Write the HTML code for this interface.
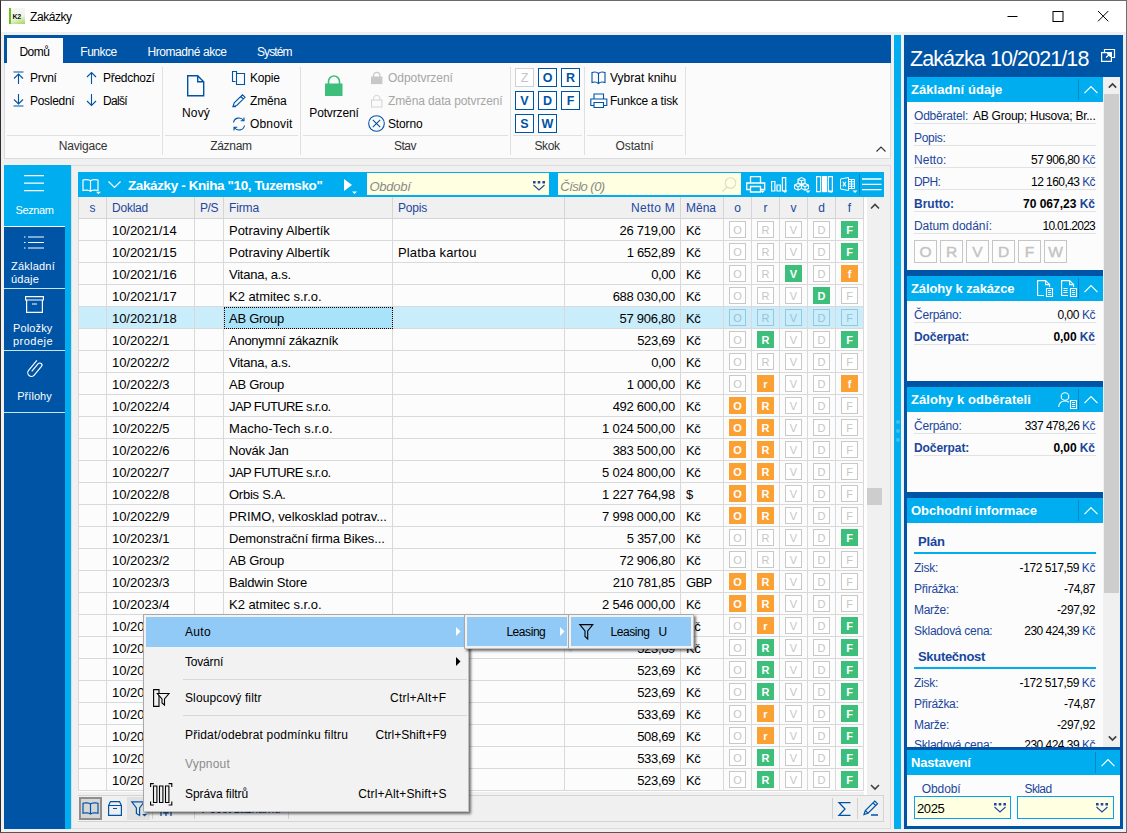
<!DOCTYPE html>
<html lang="cs">
<head>
<meta charset="utf-8">
<title>Zakázky</title>
<style>
*{box-sizing:border-box;margin:0;padding:0}
html,body{width:1127px;height:833px;overflow:hidden;background:#fff}
body{font-family:"Liberation Sans",sans-serif;font-size:12px;color:#000;position:relative}
.a{position:absolute}
i{font-style:normal}
svg{position:absolute;overflow:visible}
/* window frame */
#frame{left:0;top:0;width:1127px;height:833px;border:1px solid #2e2e2e;border-top-color:#6a6a6a;border-right-color:#6e6e6e;border-bottom:2px solid #5c5252}
#title{left:1px;top:1px;width:1125px;height:31px;background:#fff}
#bg{left:1px;top:32px;width:1125px;height:800px;background:#f0f0f0}
/* ribbon */
#rtabs{left:4px;top:35px;width:887px;height:28px;background:#0054a6}
.tab{position:absolute;top:39px;height:25px;line-height:26px;color:#fff;font-size:12px;white-space:nowrap}
#rbody{left:4px;top:63px;width:887px;height:96px;background:#fbfbfb;border:1px solid #dcdcdc;border-top:none}
.rt{position:absolute;white-space:nowrap;font-size:12px;line-height:14px}
.dis{color:#a6a6a6}
.vsep{position:absolute;top:67px;width:1px;height:88px;background:#e0e0e0}
.hsep{position:absolute;top:135px;height:1px;background:#e0e0e0}
.gl{position:absolute;top:139px;text-align:center;font-size:12px;line-height:14px;color:#333}
.jb{position:absolute;width:19px;height:19px;border:1px solid #0054a6;color:#0054a6;font-weight:bold;font-size:12.500px;line-height:19px;text-align:center;background:#fff}
.jb.d{border-color:#d0d0d0;color:#c4c4c4;font-weight:normal}
/* sidebar */
#side{left:4px;top:165px;width:67px;height:664px;background:#00aeef}
.sb{position:absolute;left:0;width:61px;background:#0054a6;color:#fff;text-align:center;font-size:12px;line-height:13px}
.sbt{position:absolute;left:0;width:100%;text-align:center;color:#fff;font-size:11px;line-height:13px}
/* grid */
#gpanel{left:71px;top:165px;width:820px;height:664px;border:1px solid #dcdcdc;background:#f0f0f0}
#ghead{left:78px;top:172px;width:806px;height:25px;background:#00aeef}
#gcols{left:78px;top:197px;width:786px;height:22px;background:#f0f0f0}
.h{position:absolute;top:0;height:22px;line-height:23px;color:#23479e;font-size:12px;border-right:1px solid #d5d5d5;border-bottom:1px solid #d5d5d5;padding-left:4px;white-space:nowrap}
#gbody{left:78px;top:219px;width:786px;height:573px;background:#fcfcfc}
.r{position:absolute;left:78px;width:786px;height:22px;background:#fcfcfc}
.r.sel{background:#c9edfb}
.c{position:absolute;top:0;height:22px;line-height:23px;font-size:13px;border-right:1px solid #d9d9d9;border-bottom:1px solid #d9d9d9;padding-left:5px;white-space:nowrap;overflow:hidden}
.c1{left:0;width:29px;border-left:1px solid #d9d9d9}.c2{left:29px;width:88px;padding-left:5px}.c3{left:117px;width:29px}.c4{left:146px;width:169px}
.c5{left:315px;width:172px}.c6{left:487px;width:116px;text-align:right;padding-right:5px}.c7{left:603px;width:43px;padding-left:5px}
.c8{left:646px;width:28px}.c9{left:674px;width:28px}.c10{left:702px;width:28px}.c11{left:730px;width:28px}.c12{left:758px;width:28px}
.c8,.c9,.c10,.c11,.c12{padding:0}
.selc{background:#a9e3f9;outline:1px dotted #000;outline-offset:-1px}
.fl{position:absolute;left:5px;top:2px;width:17px;height:17px;border:1px solid #c8c8c8;color:#c6c6c6;font-size:11px;line-height:17px;text-align:center;background:#fff}
.sel .fl{background:transparent;border-color:#9ac6da;color:#96c3d8}
.fl.g{background:#3dbf7b;border-color:#3dbf7b;color:#fff;font-weight:bold}
.fl.o{background:#fba134;border-color:#fba134;color:#fff;font-weight:bold}
/* right panel */
#rp{left:904px;top:35px;width:219px;height:794px;background:#0054a6}
.sh{position:absolute;left:907px;width:196px;height:25px;background:#00aeef;color:#fff;font-weight:bold;font-size:13px;line-height:25px;padding-left:4px;white-space:nowrap;overflow:hidden}
.sc{position:absolute;left:907px;width:196px;background:#fcfcfc}
.lb{position:absolute;left:914px;font-size:12px;line-height:14px;color:#1b469c;white-space:nowrap}
.vl{position:absolute;right:32px;font-size:12px;line-height:14px;color:#000;white-space:nowrap;text-align:right}
.vl b,.lb b{font-weight:bold}
.kc{color:#1b469c}
.ln{position:absolute;left:914px;width:182px;height:1px;background:#e2e2e2}
.chev{position:absolute;width:24px;height:24px}
.pf{position:absolute;width:23px;height:23px;border:1px solid #c6c6c6;background:#fdfdfd;color:#c3c3c3;font-size:15.500px;line-height:22px;text-align:center;-webkit-text-stroke:.4px #c3c3c3}
/* menu */
.menu{position:absolute;background:#f2f2f2;border:1px solid #a8a8a8;border-right-color:#c0c0c0;border-bottom-color:#c0c0c0;box-shadow:2px 2px 2.500px rgba(0,0,0,.55)}
.mi{position:absolute;font-size:12px;line-height:14px;white-space:nowrap;color:#000}
</style>
</head>
<body>
<div id="frame" class="a"></div>
<div id="title" class="a"></div>
<div id="bg" class="a"></div>

<!-- TITLE BAR -->
<div class="a" style="left:9px;top:8px;width:16px;height:16px;background:linear-gradient(160deg,#f7f7f7 0%,#f1f5ea 55%,#a3d755 100%);border-left:2px solid #6cc016;overflow:hidden"><i style="position:absolute;left:1.500px;top:4.500px;font-size:7px;line-height:7px;font-weight:bold;color:#111;letter-spacing:-.4px">K2</i></div>
<div class="a" style="letter-spacing:-0.43px;left:30px;top:10px;font-size:12px;line-height:15px">Zakázky</div>
<svg style="left:1007px;top:10px" width="110" height="14" viewBox="0 0 110 14" fill="none" stroke="#000" stroke-width="1"><path d="M.500 6.500h10"/><rect x="46" y="1.500" width="10" height="10"/><path d="M91 1l10.300 10.300M101.300 1L91 11.300"/></svg>

<!-- RIBBON -->
<div id="rtabs" class="a"></div>
<div class="a" style="left:7px;top:38px;width:56px;height:25px;background:#fbfbfb"></div>
<div class="tab" style="letter-spacing:-0.55px;left:19.500px;color:#000">Domů</div>
<div class="tab" style="letter-spacing:-0.49px;left:80.300px">Funkce</div>
<div class="tab" style="letter-spacing:-0.44px;left:147.500px">Hromadné akce</div>
<div class="tab" style="letter-spacing:-0.92px;left:257px">Systém</div>
<div id="rbody" class="a"></div>
<div class="vsep" style="left:162px"></div><div class="vsep" style="left:300px"></div><div class="vsep" style="left:510px"></div><div class="vsep" style="left:584px"></div><div class="vsep" style="left:685px"></div>
<div class="hsep" style="left:7px;width:153px"></div><div class="hsep" style="left:165px;width:133px"></div><div class="hsep" style="left:303px;width:205px"></div><div class="hsep" style="left:513px;width:69px"></div><div class="hsep" style="left:587px;width:96px"></div>
<div class="gl" style="left:4px;width:158px"><i style="letter-spacing:-0.19px;">Navigace</i></div>
<div class="gl" style="left:162px;width:138px"><i style="letter-spacing:-0.28px;">Záznam</i></div>
<div class="gl" style="left:300px;width:210px"><i style="letter-spacing:-0.53px;">Stav</i></div>
<div class="gl" style="left:510px;width:74px"><i style="letter-spacing:-0.42px;">Skok</i></div>
<div class="gl" style="left:584px;width:101px"><i style="letter-spacing:-0.10px;">Ostatní</i></div>
<!-- Navigace -->
<svg style="left:13px;top:71px" width="12" height="14" viewBox="0 0 12 14" fill="none" stroke="#0054a6" stroke-width="1.1"><path d="M.5 1h10M5.5 3v10M1 7.5L5.5 3 10 7.5"/></svg>
<div class="rt" style="letter-spacing:-0.28px;left:30px;top:71px">První</div>
<svg style="left:13px;top:93px" width="12" height="14" viewBox="0 0 12 14" fill="none" stroke="#0054a6" stroke-width="1.1"><path d="M.5 13h10M5.5 1v10M1 6.5L5.5 11 10 6.5"/></svg>
<div class="rt" style="letter-spacing:-0.29px;left:30px;top:94px">Poslední</div>
<svg style="left:86px;top:71px" width="12" height="14" viewBox="0 0 12 14" fill="none" stroke="#0054a6" stroke-width="1.1"><path d="M5.5 1.5v11.5M1 6L5.5 1.5 10 6"/></svg>
<div class="rt" style="letter-spacing:-0.29px;left:103px;top:71px">Předchozí</div>
<svg style="left:86px;top:93px" width="12" height="14" viewBox="0 0 12 14" fill="none" stroke="#0054a6" stroke-width="1.1"><path d="M5.5 1v11.5M1 8L5.5 12.5 10 8"/></svg>
<div class="rt" style="letter-spacing:-0.67px;left:103px;top:94px">Další</div>
<!-- Zaznam -->
<svg style="left:187px;top:75px" width="18" height="22" viewBox="0 0 18 22" fill="none" stroke="#0054a6" stroke-width="1.4"><path d="M.7.7h10l6 6v14H.7zM10.7.7v6h6"/></svg>
<div class="rt" style="left:172px;top:106px;width:48px;text-align:center"><i style="letter-spacing:0.16px;">Nový</i></div>
<svg style="left:232px;top:71px" width="14" height="14" viewBox="0 0 14 14" fill="none" stroke="#0054a6" stroke-width="1.1"><path d="M4.5 2.5v-2h-4v10h3M4.5 2.5h8v11h-8z" fill="#fbfbfb"/></svg>
<div class="rt" style="letter-spacing:-0.18px;left:250px;top:71px">Kopie</div>
<svg style="left:232px;top:94px" width="14" height="14" viewBox="0 0 14 14" fill="none" stroke="#0054a6" stroke-width="1.1"><path d="M1 12.5l1.2-3.6L10.5.8l2.5 2.5-8.3 8.2zM8.8 2.5l2.5 2.5M1 12.8h3"/></svg>
<div class="rt" style="letter-spacing:-0.19px;left:250px;top:94px">Změna</div>
<svg style="left:232px;top:117px" width="14" height="14" viewBox="0 0 14 14" fill="none" stroke="#0054a6" stroke-width="1.1"><path d="M1.5 5.5A5.5 5.5 0 0 1 11.5 3.5M12 .5v3.3H8.7M12.5 8.5A5.5 5.5 0 0 1 2.5 10.5M2 13.5v-3.3h3.3"/></svg>
<div class="rt" style="letter-spacing:0.18px;left:250px;top:117px">Obnovit</div>
<!-- Stav -->
<svg style="left:325px;top:75px" width="18" height="22" viewBox="0 0 18 22"><path d="M3.5 9V6.5a5.5 5.5 0 0 1 11 0V9" fill="none" stroke="#3dbf7b" stroke-width="1.6"/><rect x="0" y="8.5" width="17.5" height="12.5" fill="#3dbf7b"/></svg>
<div class="rt" style="left:309px;top:106px;width:50px;text-align:center"><i style="letter-spacing:-0.14px;">Potvrzení</i></div>
<svg style="left:371px;top:71px" width="12" height="14" viewBox="0 0 12 14"><path d="M2.5 6V4.5a3.2 3.2 0 0 1 6.400 0V6" fill="none" stroke="#c8c8c8" stroke-width="1.2"/><rect x="0" y="5.500" width="11.400" height="7.600" fill="#c8c8c8"/></svg>
<div class="rt dis" style="letter-spacing:-0.05px;left:388px;top:71px">Odpotvrzení</div>
<svg style="left:371px;top:94px" width="12" height="14" viewBox="0 0 12 14"><path d="M2.5 6V4.5a3.2 3.2 0 0 1 6.400 0V6" fill="none" stroke="#d4d4d4" stroke-width="1"/><rect x=".5" y="6" width="10.400" height="7" fill="none" stroke="#d4d4d4"/></svg>
<div class="rt dis" style="letter-spacing:-0.11px;left:388px;top:94px">Změna data potvrzení</div>
<svg style="left:368px;top:115px" width="17" height="17" viewBox="0 0 17 17" fill="none" stroke="#0054a6" stroke-width="1.1"><circle cx="8.500" cy="8.500" r="7.800"/><path d="M4.800 4.800l7.400 7.400M12.200 4.800l-7.400 7.400"/></svg>
<div class="rt" style="letter-spacing:-0.14px;left:388px;top:117px">Storno</div>
<!-- Skok -->
<div class="jb d" style="left:515px;top:68px">Z</div><div class="jb" style="left:538px;top:68px">O</div><div class="jb" style="left:561px;top:68px">R</div>
<div class="jb" style="left:515px;top:91px">V</div><div class="jb" style="left:538px;top:91px">D</div><div class="jb" style="left:561px;top:91px">F</div>
<div class="jb" style="left:515px;top:114px">S</div><div class="jb" style="left:538px;top:114px">W</div>
<!-- Ostatni -->
<svg style="left:591px;top:71px" width="16" height="14" viewBox="0 0 16 14" fill="none" stroke="#0054a6" stroke-width="1.1"><path d="M7.500 2.500C6 1 3 .8 1 1.500v10c2-.7 5-.5 6.500 1 1.500-1.500 4.500-1.700 6.500-1v-10c-2-.7-5-.5-6.500 1zM7.500 2.500v10"/></svg>
<div class="rt" style="letter-spacing:0.01px;left:610px;top:71px">Vybrat knihu</div>
<svg style="left:590px;top:93px" width="18" height="16" viewBox="0 0 18 16" fill="none" stroke="#0054a6" stroke-width="1.1"><path d="M4 6V1h9.500v5M4 12.500H.800v-6.500h16v6.500H13.500M4 9.500h9.500v5H4z"/></svg>
<div class="rt" style="letter-spacing:-0.23px;left:610px;top:94px">Funkce a tisk</div>
<svg style="left:876px;top:146px" width="10" height="6" viewBox="0 0 10 6" fill="none" stroke="#333" stroke-width="1.1"><path d="M.5 5.500L5 1l4.500 4.500"/></svg>


<!-- SIDEBAR -->
<div id="side" class="a">
<svg style="left:20px;top:10px" width="20" height="17" viewBox="0 0 20 17" stroke="#fff" stroke-width="1.300"><path d="M0 .700h20M0 8.200h20M0 15.700h20"/></svg>
<div class="sbt" style="top:39px;width:61px"><i style="letter-spacing:-0.39px;">Seznam</i></div>
<div class="a" style="left:0;top:61px;width:61px;height:1px;background:#fff"></div>
<div class="sb" style="top:62px;height:61px"></div>
<svg style="left:20px;top:70.500px" width="20" height="13" viewBox="0 0 20 13" stroke="#fff" stroke-width="1.2"><path d="M4 1h16M4 6.500h16M4 12h16M0 1h1.500M0 6.500h1.500M0 12h1.500"/></svg>
<div class="sbt" style="top:95px;left:7px;width:54px;text-align:left"><i style="letter-spacing:0.22px;">Základní</i><br><i style="letter-spacing:0.22px;">údaje</i></div>
<div class="sb" style="top:124px;height:61px"></div>
<svg style="left:21px;top:131px" width="19" height="17" viewBox="0 0 19 17" fill="none" stroke="#fff" stroke-width="1.2"><path d="M.600.600h17.800v3.400H.600zM1.600 4v12.400h15.800V4M7 8h5"/></svg>
<div class="sbt" style="top:157px;left:9px;width:52px;text-align:left"><i style="letter-spacing:0.14px;">Položky</i><br><i style="letter-spacing:0.47px;">prodeje</i></div>
<div class="sb" style="top:186px;height:61px"></div>
<svg style="left:21px;top:194px" width="19" height="20" viewBox="0 0 19 20" fill="none" stroke="#fff" stroke-width="1.250"><g transform="translate(9.500 10) rotate(-50) scale(.92) translate(-9.500 -6.100)"><path d="M5.500 5.500h11a2.300 2.300 0 0 1 0 4.600H4.300a4 4 0 0 1 0-8h14"/></g></svg>
<div class="sbt" style="top:225px;width:61px"><i style="letter-spacing:0.04px;">Přílohy</i></div>
<div class="sb" style="top:248px;height:416px"></div>
<div class="a" style="left:0;top:123px;width:61px;height:1px;background:#c4e6f7"></div>
<div class="a" style="left:0;top:185px;width:61px;height:1px;background:#c4e6f7"></div>
<div class="a" style="left:0;top:247px;width:61px;height:1px;background:#c4e6f7"></div>

</div>

<!-- GRID -->
<div id="gpanel" class="a"></div>
<div id="ghead" class="a"></div>
<svg style="left:82px;top:179px" width="18" height="16" viewBox="0 0 18 16" fill="none" stroke="#fff" stroke-width="1.2"><path d="M8.500 1.800C7 .500 3 .300 1 1v10.500c2-.7 6-.5 7.500.8 1.500-1.300 5.500-1.500 7.500-.8V1c-2-.7-6-.5-7.500.8zM8.500 1.800v10.500"/><path d="M14 12.800h5l-2.500 2.500z" fill="#fff" stroke="none"/></svg>
<svg style="left:108px;top:181px" width="14" height="8" viewBox="0 0 14 8" fill="none" stroke="#fff" stroke-width="1.2"><path d="M.500.500l6 6 6-6"/></svg>
<div class="a" style="letter-spacing:-0.39px;left:128px;top:176.500px;font-size:13.500px;line-height:18px;font-weight:bold;color:#fff;white-space:nowrap">Zakázky - Kniha "10, Tuzemsko"</div>
<svg style="left:344px;top:179px" width="14" height="16" viewBox="0 0 14 16" fill="#fff"><path d="M0 0l8 6-8 6zM8 12.500h5l-2.500 2.500z"/></svg>
<div class="a" style="left:367px;top:173px;width:182px;height:22px;background:#ffffe1"></div>
<div class="a" style="letter-spacing:-0.28px;left:369.500px;top:178.500px;font-size:13px;line-height:15px;font-style:italic;color:#8a8a8a">Období</div>
<svg style="left:532.5px;top:180.5px" width="12" height="10" viewBox="0 0 12 10" fill="none" stroke="#23479e" stroke-width="1.100"><path d="M0 0h2.600v2.400H0zM4.700 0h2.600v2.400H4.700zM9.400 0h2.600v2.400H9.400z" fill="#23479e" stroke="none"/><path d="M.500 4l5.500 5 5.500-5"/></svg>
<div class="a" style="left:558px;top:173px;width:183px;height:22px;background:#ffffe1"></div>
<div class="a" style="letter-spacing:-0.53px;left:560.300px;top:178.500px;font-size:13px;line-height:15px;font-style:italic;color:#8a8a8a">Číslo (0)</div>
<svg style="left:722px;top:177px" width="15" height="15" viewBox="0 0 15 15" fill="none" stroke="#dcdcc8" stroke-width="1.1"><circle cx="8.500" cy="6" r="5.300"/><path d="M5 10L.500 14.500"/></svg>
<!-- printer -->
<svg style="left:746px;top:176px" width="20" height="18" viewBox="0 0 20 18" fill="none" stroke="#fff" stroke-width="1.300"><path d="M4.500 7V.700h10V7M4.500 13.500H.700V7h18v6.500H14.500M4.500 10.500h10v5.500h-10z"/><path d="M14 14.500h5l-2.500 2.500z" fill="#fff" stroke="none"/></svg>
<!-- bars -->
<svg style="left:771px;top:177px" width="17" height="17" viewBox="0 0 17 17" fill="none" stroke="#fff" stroke-width="1.200"><path d="M.600 4.500h3.300v9.500H.600zM6 8h3.300v6H6zM11.400.600h3.300v13.400h-3.300z"/><path d="M11.500 13.500h5l-2.500 2.500z" fill="#fff" stroke="none"/></svg>
<!-- cubes -->
<svg style="left:794px;top:177px" width="17" height="17" viewBox="0 0 17 17" fill="none" stroke="#fff" stroke-width="1.100"><path d="M7.500.600l3.500 1.700v3.400L7.500 7.400 4 5.700V2.300zM4 2.300l3.500 1.700 3.500-1.700M7.500 4v3.400"/><path d="M4 6.400l3.500 1.700v3.400L4 13.200.500 11.500V8.100zM.500 8.100L4 9.800l3.500-1.700M4 9.800v3.400"/><path d="M11 6.400l3.500 1.700v3.400L11 13.200 7.500 11.500V8.100zM7.500 8.100L11 9.800l3.500-1.700M11 9.800v3.400"/><path d="M11.500 13.500h5l-2.500 2.500z" fill="#fff" stroke="none"/></svg>
<!-- columns -->
<svg style="left:816px;top:176px" width="18" height="18" viewBox="0 0 18 18" fill="none" stroke="#fff" stroke-width="1.200"><path d="M.600.600h4v15h-4zM12.400.600h4v15h-4z"/><rect x="6" y="0" width="5" height="16.200" fill="#fff" stroke="none"/><path d="M12.500 14.500h5l-2.500 2.500z" fill="#fff" stroke="none"/></svg>
<!-- excel -->
<svg style="left:840px;top:177px" width="18" height="17" viewBox="0 0 18 17" fill="none" stroke="#fff" stroke-width="1"><path d="M8.500.500L.500 2v10l8 1.500zM8.500 2.500h6v9h-6M8.500 4.700h6M8.500 7h6M8.500 9.300h6M11.500 2.500v9"/><path d="M2.800 4.800l3.200 4.600M6 4.800L2.800 9.400" stroke-width="1.100"/><path d="M12.500 13.500h5l-2.500 2.500z" fill="#fff" stroke="none"/></svg>
<div class="a" style="left:859px;top:174px;width:1px;height:21px;background:#0b7fb8"></div>
<svg style="left:862px;top:178px" width="20" height="13" viewBox="0 0 20 13" stroke="#fff" stroke-width="1.300"><path d="M0 1h19.500M0 6.300h19.500M0 11.600h19.500"/></svg>
<!-- scrollbar -->
<div class="a" style="left:864px;top:197px;width:20px;height:598px;background:#f0f0f0;border-left:3px solid #fff"></div>
<svg style="left:870px;top:203px" width="10" height="7" viewBox="0 0 10 7" fill="none" stroke="#404040" stroke-width="1.600"><path d="M1 5.500l4-4 4 4"/></svg>
<svg style="left:870px;top:784px" width="10" height="7" viewBox="0 0 10 7" fill="none" stroke="#404040" stroke-width="1.600"><path d="M1 1l4 4 4-4"/></svg>
<div class="a" style="left:867px;top:488px;width:15px;height:17px;background:#cdcdcd"></div>

<div id="gcols" class="a">
<div class="h" style="left:0;width:29px;text-align:center;padding:0;border-left:1px solid #d5d5d5">s</div>
<div class="h" style="left:29px;width:88px;padding-left:5px"><i style="letter-spacing:-0.23px;">Doklad</i></div>
<div class="h" style="left:117px;width:29px;padding-left:5px"><i style="letter-spacing:-0.45px;">P/S</i></div>
<div class="h" style="left:146px;width:169px;padding-left:5px"><i style="letter-spacing:-0.13px;">Firma</i></div>
<div class="h" style="left:315px;width:172px;padding-left:5px"><i style="letter-spacing:-0.21px;">Popis</i></div>
<div class="h" style="left:487px;width:116px;text-align:right;padding-right:5px"><i style="letter-spacing:0.28px;">Netto M</i></div>
<div class="h" style="left:603px;width:43px;padding-left:5px"><i style="letter-spacing:-0.01px;">Měna</i></div>
<div class="h" style="left:646px;width:28px;text-align:center;padding:0">o</div>
<div class="h" style="left:674px;width:28px;text-align:center;padding:0">r</div>
<div class="h" style="left:702px;width:28px;text-align:center;padding:0">v</div>
<div class="h" style="left:730px;width:28px;text-align:center;padding:0">d</div>
<div class="h" style="left:758px;width:28px;text-align:center;padding:0">f</div>
</div>
<div id="gbody" class="a"></div>
<div class="r" style="top:219px"><span class="c c1"></span><span class="c c2"><i style="letter-spacing:-0.05px;">10/2021/14</i></span><span class="c c3"></span><span class="c c4"><i style="letter-spacing:-0.02px;">Potraviny Albertík</i></span><span class="c c5"></span><span class="c c6"><i style="letter-spacing:-0.27px;">26 719,00</i></span><span class="c c7"><i style="letter-spacing:-0.49px;">Kč</i></span><span class="c c8"><i class="fl">O</i></span><span class="c c9"><i class="fl">R</i></span><span class="c c10"><i class="fl">V</i></span><span class="c c11"><i class="fl">D</i></span><span class="c c12"><i class="fl g">F</i></span></div>
<div class="r" style="top:241px"><span class="c c1"></span><span class="c c2"><i style="letter-spacing:-0.05px;">10/2021/15</i></span><span class="c c3"></span><span class="c c4"><i style="letter-spacing:-0.02px;">Potraviny Albertík</i></span><span class="c c5"><i style="letter-spacing:0.15px;">Platba kartou</i></span><span class="c c6"><i style="letter-spacing:-0.28px;">1 652,89</i></span><span class="c c7"><i style="letter-spacing:-0.49px;">Kč</i></span><span class="c c8"><i class="fl">O</i></span><span class="c c9"><i class="fl">R</i></span><span class="c c10"><i class="fl">V</i></span><span class="c c11"><i class="fl">D</i></span><span class="c c12"><i class="fl g">F</i></span></div>
<div class="r" style="top:263px"><span class="c c1"></span><span class="c c2"><i style="letter-spacing:-0.05px;">10/2021/16</i></span><span class="c c3"></span><span class="c c4"><i style="letter-spacing:-0.25px;">Vitana, a.s.</i></span><span class="c c5"></span><span class="c c6"><i style="letter-spacing:-0.38px;">0,00</i></span><span class="c c7"><i style="letter-spacing:-0.49px;">Kč</i></span><span class="c c8"><i class="fl">O</i></span><span class="c c9"><i class="fl">R</i></span><span class="c c10"><i class="fl g">V</i></span><span class="c c11"><i class="fl">D</i></span><span class="c c12"><i class="fl o">f</i></span></div>
<div class="r" style="top:285px"><span class="c c1"></span><span class="c c2"><i style="letter-spacing:-0.05px;">10/2021/17</i></span><span class="c c3"></span><span class="c c4"><i style="letter-spacing:-0.04px;">K2 atmitec s.r.o.</i></span><span class="c c5"></span><span class="c c6"><i style="letter-spacing:-0.27px;">688 030,00</i></span><span class="c c7"><i style="letter-spacing:-0.49px;">Kč</i></span><span class="c c8"><i class="fl">O</i></span><span class="c c9"><i class="fl">R</i></span><span class="c c10"><i class="fl">V</i></span><span class="c c11"><i class="fl g">D</i></span><span class="c c12"><i class="fl">F</i></span></div>
<div class="r sel" style="top:307px"><span class="c c1"></span><span class="c c2"><i style="letter-spacing:-0.05px;">10/2021/18</i></span><span class="c c3"></span><span class="c c4 selc"><i style="letter-spacing:-0.26px;">AB Group</i></span><span class="c c5"></span><span class="c c6"><i style="letter-spacing:-0.27px;">57 906,80</i></span><span class="c c7"><i style="letter-spacing:-0.49px;">Kč</i></span><span class="c c8"><i class="fl">O</i></span><span class="c c9"><i class="fl">R</i></span><span class="c c10"><i class="fl">V</i></span><span class="c c11"><i class="fl">D</i></span><span class="c c12"><i class="fl">F</i></span></div>
<div class="r" style="top:329px"><span class="c c1"></span><span class="c c2"><i style="letter-spacing:-0.03px;">10/2022/1</i></span><span class="c c3"></span><span class="c c4"><i style="letter-spacing:-0.26px;">Anonymní zákazník</i></span><span class="c c5"></span><span class="c c6"><i style="letter-spacing:-0.33px;">523,69</i></span><span class="c c7"><i style="letter-spacing:-0.49px;">Kč</i></span><span class="c c8"><i class="fl">O</i></span><span class="c c9"><i class="fl g">R</i></span><span class="c c10"><i class="fl">V</i></span><span class="c c11"><i class="fl">D</i></span><span class="c c12"><i class="fl g">F</i></span></div>
<div class="r" style="top:351px"><span class="c c1"></span><span class="c c2"><i style="letter-spacing:-0.03px;">10/2022/2</i></span><span class="c c3"></span><span class="c c4"><i style="letter-spacing:-0.25px;">Vitana, a.s.</i></span><span class="c c5"></span><span class="c c6"><i style="letter-spacing:-0.38px;">0,00</i></span><span class="c c7"><i style="letter-spacing:-0.49px;">Kč</i></span><span class="c c8"><i class="fl">O</i></span><span class="c c9"><i class="fl">R</i></span><span class="c c10"><i class="fl">V</i></span><span class="c c11"><i class="fl">D</i></span><span class="c c12"><i class="fl">F</i></span></div>
<div class="r" style="top:373px"><span class="c c1"></span><span class="c c2"><i style="letter-spacing:-0.03px;">10/2022/3</i></span><span class="c c3"></span><span class="c c4"><i style="letter-spacing:-0.26px;">AB Group</i></span><span class="c c5"></span><span class="c c6"><i style="letter-spacing:-0.28px;">1 000,00</i></span><span class="c c7"><i style="letter-spacing:-0.49px;">Kč</i></span><span class="c c8"><i class="fl">O</i></span><span class="c c9"><i class="fl o">r</i></span><span class="c c10"><i class="fl">V</i></span><span class="c c11"><i class="fl">D</i></span><span class="c c12"><i class="fl o">f</i></span></div>
<div class="r" style="top:395px"><span class="c c1"></span><span class="c c2"><i style="letter-spacing:-0.03px;">10/2022/4</i></span><span class="c c3"></span><span class="c c4"><i style="letter-spacing:-0.60px;">JAP FUTURE s.r.o.</i></span><span class="c c5"></span><span class="c c6"><i style="letter-spacing:-0.27px;">492 600,00</i></span><span class="c c7"><i style="letter-spacing:-0.49px;">Kč</i></span><span class="c c8"><i class="fl o">O</i></span><span class="c c9"><i class="fl o">R</i></span><span class="c c10"><i class="fl">V</i></span><span class="c c11"><i class="fl">D</i></span><span class="c c12"><i class="fl">F</i></span></div>
<div class="r" style="top:417px"><span class="c c1"></span><span class="c c2"><i style="letter-spacing:-0.03px;">10/2022/5</i></span><span class="c c3"></span><span class="c c4"><i style="letter-spacing:0.07px;">Macho-Tech s.r.o.</i></span><span class="c c5"></span><span class="c c6"><i style="letter-spacing:-0.25px;">1 024 500,00</i></span><span class="c c7"><i style="letter-spacing:-0.49px;">Kč</i></span><span class="c c8"><i class="fl o">O</i></span><span class="c c9"><i class="fl o">R</i></span><span class="c c10"><i class="fl">V</i></span><span class="c c11"><i class="fl">D</i></span><span class="c c12"><i class="fl">F</i></span></div>
<div class="r" style="top:439px"><span class="c c1"></span><span class="c c2"><i style="letter-spacing:-0.03px;">10/2022/6</i></span><span class="c c3"></span><span class="c c4"><i style="letter-spacing:-0.22px;">Novák Jan</i></span><span class="c c5"></span><span class="c c6"><i style="letter-spacing:-0.27px;">383 500,00</i></span><span class="c c7"><i style="letter-spacing:-0.49px;">Kč</i></span><span class="c c8"><i class="fl o">O</i></span><span class="c c9"><i class="fl o">R</i></span><span class="c c10"><i class="fl">V</i></span><span class="c c11"><i class="fl">D</i></span><span class="c c12"><i class="fl">F</i></span></div>
<div class="r" style="top:461px"><span class="c c1"></span><span class="c c2"><i style="letter-spacing:-0.03px;">10/2022/7</i></span><span class="c c3"></span><span class="c c4"><i style="letter-spacing:-0.60px;">JAP FUTURE s.r.o.</i></span><span class="c c5"></span><span class="c c6"><i style="letter-spacing:-0.25px;">5 024 800,00</i></span><span class="c c7"><i style="letter-spacing:-0.49px;">Kč</i></span><span class="c c8"><i class="fl o">O</i></span><span class="c c9"><i class="fl o">R</i></span><span class="c c10"><i class="fl">V</i></span><span class="c c11"><i class="fl">D</i></span><span class="c c12"><i class="fl">F</i></span></div>
<div class="r" style="top:483px"><span class="c c1"></span><span class="c c2"><i style="letter-spacing:-0.03px;">10/2022/8</i></span><span class="c c3"></span><span class="c c4"><i style="letter-spacing:-0.25px;">Orbis S.A.</i></span><span class="c c5"></span><span class="c c6"><i style="letter-spacing:-0.25px;">1 227 764,98</i></span><span class="c c7"><i style="letter-spacing:-0.23px;">$</i></span><span class="c c8"><i class="fl o">O</i></span><span class="c c9"><i class="fl o">R</i></span><span class="c c10"><i class="fl">V</i></span><span class="c c11"><i class="fl">D</i></span><span class="c c12"><i class="fl">F</i></span></div>
<div class="r" style="top:505px"><span class="c c1"></span><span class="c c2"><i style="letter-spacing:-0.03px;">10/2022/9</i></span><span class="c c3"></span><span class="c c4"><i style="letter-spacing:-0.09px;">PRIMO, velkosklad potrav...</i></span><span class="c c5"></span><span class="c c6"><i style="letter-spacing:-0.25px;">7 998 000,00</i></span><span class="c c7"><i style="letter-spacing:-0.49px;">Kč</i></span><span class="c c8"><i class="fl o">O</i></span><span class="c c9"><i class="fl o">R</i></span><span class="c c10"><i class="fl">V</i></span><span class="c c11"><i class="fl">D</i></span><span class="c c12"><i class="fl">F</i></span></div>
<div class="r" style="top:527px"><span class="c c1"></span><span class="c c2"><i style="letter-spacing:-0.03px;">10/2023/1</i></span><span class="c c3"></span><span class="c c4"><i style="letter-spacing:-0.15px;">Demonstrační firma Bikes...</i></span><span class="c c5"></span><span class="c c6"><i style="letter-spacing:-0.28px;">5 357,00</i></span><span class="c c7"><i style="letter-spacing:-0.49px;">Kč</i></span><span class="c c8"><i class="fl">O</i></span><span class="c c9"><i class="fl">R</i></span><span class="c c10"><i class="fl">V</i></span><span class="c c11"><i class="fl">D</i></span><span class="c c12"><i class="fl g">F</i></span></div>
<div class="r" style="top:549px"><span class="c c1"></span><span class="c c2"><i style="letter-spacing:-0.03px;">10/2023/2</i></span><span class="c c3"></span><span class="c c4"><i style="letter-spacing:-0.26px;">AB Group</i></span><span class="c c5"></span><span class="c c6"><i style="letter-spacing:-0.27px;">72 906,80</i></span><span class="c c7"><i style="letter-spacing:-0.49px;">Kč</i></span><span class="c c8"><i class="fl">O</i></span><span class="c c9"><i class="fl">R</i></span><span class="c c10"><i class="fl">V</i></span><span class="c c11"><i class="fl">D</i></span><span class="c c12"><i class="fl">F</i></span></div>
<div class="r" style="top:571px"><span class="c c1"></span><span class="c c2"><i style="letter-spacing:-0.03px;">10/2023/3</i></span><span class="c c3"></span><span class="c c4"><i style="letter-spacing:-0.17px;">Baldwin Store</i></span><span class="c c5"></span><span class="c c6"><i style="letter-spacing:-0.27px;">210 781,85</i></span><span class="c c7"><i style="letter-spacing:-0.66px;">GBP</i></span><span class="c c8"><i class="fl o">O</i></span><span class="c c9"><i class="fl o">R</i></span><span class="c c10"><i class="fl">V</i></span><span class="c c11"><i class="fl">D</i></span><span class="c c12"><i class="fl">F</i></span></div>
<div class="r" style="top:593px"><span class="c c1"></span><span class="c c2"><i style="letter-spacing:-0.03px;">10/2023/4</i></span><span class="c c3"></span><span class="c c4"><i style="letter-spacing:-0.04px;">K2 atmitec s.r.o.</i></span><span class="c c5"></span><span class="c c6"><i style="letter-spacing:-0.25px;">2 546 000,00</i></span><span class="c c7"><i style="letter-spacing:-0.49px;">Kč</i></span><span class="c c8"><i class="fl o">O</i></span><span class="c c9"><i class="fl o">R</i></span><span class="c c10"><i class="fl">V</i></span><span class="c c11"><i class="fl">D</i></span><span class="c c12"><i class="fl">F</i></span></div>
<div class="r" style="top:615px"><span class="c c1"></span><span class="c c2"><i style="letter-spacing:-0.03px;">10/2023/5</i></span><span class="c c3"></span><span class="c c4"><i style="letter-spacing:-0.26px;">Anonymní zákazník</i></span><span class="c c5"></span><span class="c c6"><i style="letter-spacing:-0.33px;">523,69</i></span><span class="c c7"><i style="letter-spacing:-0.49px;">Kč</i></span><span class="c c8"><i class="fl">O</i></span><span class="c c9"><i class="fl o">r</i></span><span class="c c10"><i class="fl">V</i></span><span class="c c11"><i class="fl">D</i></span><span class="c c12"><i class="fl g">F</i></span></div>
<div class="r" style="top:637px"><span class="c c1"></span><span class="c c2"><i style="letter-spacing:-0.03px;">10/2023/6</i></span><span class="c c3"></span><span class="c c4"><i style="letter-spacing:-0.26px;">Anonymní zákazník</i></span><span class="c c5"></span><span class="c c6"><i style="letter-spacing:-0.33px;">523,69</i></span><span class="c c7"><i style="letter-spacing:-0.49px;">Kč</i></span><span class="c c8"><i class="fl">O</i></span><span class="c c9"><i class="fl g">R</i></span><span class="c c10"><i class="fl">V</i></span><span class="c c11"><i class="fl">D</i></span><span class="c c12"><i class="fl g">F</i></span></div>
<div class="r" style="top:659px"><span class="c c1"></span><span class="c c2"><i style="letter-spacing:-0.03px;">10/2023/7</i></span><span class="c c3"></span><span class="c c4"><i style="letter-spacing:-0.26px;">Anonymní zákazník</i></span><span class="c c5"></span><span class="c c6"><i style="letter-spacing:-0.33px;">523,69</i></span><span class="c c7"><i style="letter-spacing:-0.49px;">Kč</i></span><span class="c c8"><i class="fl">O</i></span><span class="c c9"><i class="fl g">R</i></span><span class="c c10"><i class="fl">V</i></span><span class="c c11"><i class="fl">D</i></span><span class="c c12"><i class="fl g">F</i></span></div>
<div class="r" style="top:681px"><span class="c c1"></span><span class="c c2"><i style="letter-spacing:-0.03px;">10/2023/8</i></span><span class="c c3"></span><span class="c c4"><i style="letter-spacing:-0.26px;">Anonymní zákazník</i></span><span class="c c5"></span><span class="c c6"><i style="letter-spacing:-0.33px;">523,69</i></span><span class="c c7"><i style="letter-spacing:-0.49px;">Kč</i></span><span class="c c8"><i class="fl">O</i></span><span class="c c9"><i class="fl g">R</i></span><span class="c c10"><i class="fl">V</i></span><span class="c c11"><i class="fl">D</i></span><span class="c c12"><i class="fl g">F</i></span></div>
<div class="r" style="top:703px"><span class="c c1"></span><span class="c c2"><i style="letter-spacing:-0.03px;">10/2023/9</i></span><span class="c c3"></span><span class="c c4"><i style="letter-spacing:-0.26px;">Anonymní zákazník</i></span><span class="c c5"></span><span class="c c6"><i style="letter-spacing:-0.33px;">533,69</i></span><span class="c c7"><i style="letter-spacing:-0.49px;">Kč</i></span><span class="c c8"><i class="fl">O</i></span><span class="c c9"><i class="fl o">r</i></span><span class="c c10"><i class="fl">V</i></span><span class="c c11"><i class="fl">D</i></span><span class="c c12"><i class="fl g">F</i></span></div>
<div class="r" style="top:725px"><span class="c c1"></span><span class="c c2"><i style="letter-spacing:-0.05px;">10/2023/10</i></span><span class="c c3"></span><span class="c c4"><i style="letter-spacing:-0.26px;">Anonymní zákazník</i></span><span class="c c5"></span><span class="c c6"><i style="letter-spacing:-0.33px;">508,69</i></span><span class="c c7"><i style="letter-spacing:-0.49px;">Kč</i></span><span class="c c8"><i class="fl">O</i></span><span class="c c9"><i class="fl o">r</i></span><span class="c c10"><i class="fl">V</i></span><span class="c c11"><i class="fl">D</i></span><span class="c c12"><i class="fl g">F</i></span></div>
<div class="r" style="top:747px"><span class="c c1"></span><span class="c c2"><i style="letter-spacing:0.05px;">10/2023/11</i></span><span class="c c3"></span><span class="c c4"><i style="letter-spacing:-0.26px;">Anonymní zákazník</i></span><span class="c c5"></span><span class="c c6"><i style="letter-spacing:-0.33px;">533,69</i></span><span class="c c7"><i style="letter-spacing:-0.49px;">Kč</i></span><span class="c c8"><i class="fl">O</i></span><span class="c c9"><i class="fl g">R</i></span><span class="c c10"><i class="fl">V</i></span><span class="c c11"><i class="fl">D</i></span><span class="c c12"><i class="fl g">F</i></span></div>
<div class="r" style="top:769px"><span class="c c1"></span><span class="c c2"><i style="letter-spacing:-0.05px;">10/2023/12</i></span><span class="c c3"></span><span class="c c4"><i style="letter-spacing:-0.26px;">Anonymní zákazník</i></span><span class="c c5"></span><span class="c c6"><i style="letter-spacing:-0.33px;">523,69</i></span><span class="c c7"><i style="letter-spacing:-0.49px;">Kč</i></span><span class="c c8"><i class="fl">O</i></span><span class="c c9"><i class="fl g">R</i></span><span class="c c10"><i class="fl">V</i></span><span class="c c11"><i class="fl">D</i></span><span class="c c12"><i class="fl g">F</i></span></div>
<div class="a" style="left:78px;top:795px;width:806px;height:27px;background:#f0f0f0;border:1px solid #d4d4d4;border-left:none"></div>
<div class="a" style="left:79px;top:797px;width:23px;height:23px;background:#d6d6d6;border:2px solid #8e8e8e"></div>
<svg style="left:82px;top:802px" width="17" height="14" viewBox="0 0 17 14" fill="none" stroke="#0054a6" stroke-width="1.200"><path d="M8.500 2C7 .700 3 .500 1 1.200v10c2-.7 6-.5 7.500.8 1.500-1.300 5.500-1.500 7.500-.8v-10c-2-.7-6-.5-7.500.8zM8.500 2v10"/></svg>
<svg style="left:108px;top:801px" width="14" height="15" viewBox="0 0 14 15" fill="none" stroke="#0054a6" stroke-width="1.200"><path d="M.600 4.500L2.500.600h9L13.400 4.500v9.900H.600zM.600 4.500h12.800M5 7.500h4"/></svg>
<div class="a" style="left:127px;top:797px;width:23px;height:23px;background:#e1e1e1"></div>
<svg style="left:131px;top:801px" width="17" height="17" viewBox="0 0 17 17" fill="none" stroke="#0054a6" stroke-width="1.200"><path d="M.800.800h12.400L8.600 7v7.500L5.400 12.500V7z"/><path d="M11 13h5l-2.500 2.500z" fill="#0054a6" stroke="none"/></svg>
<div class="a" style="left:152px;top:798px;width:1px;height:21px;background:#d0d0d0"></div>
<svg style="left:158px;top:801px" width="16" height="15" viewBox="0 0 16 15" fill="none" stroke="#0054a6" stroke-width="1.200"><path d="M3 0v15M8 0v15M13 0v15M1 4h4v3H1zM6 9h4v3H6zM11 3h4v3h-4z"/></svg>
<div class="a" style="left:179px;top:801px;font-size:12px;line-height:14px">0</div>
<div class="a" style="left:194px;top:798px;width:1px;height:21px;background:#d0d0d0"></div>
<div class="a" style="letter-spacing:-0.29px;left:201.500px;top:802px;font-size:12px;line-height:14px;color:#1c3f94;white-space:nowrap">Počet záznamů</div>
<div class="a" style="left:288px;top:798px;width:1px;height:21px;background:#d0d0d0"></div>
<div class="a" style="left:832px;top:798px;width:1px;height:21px;background:#d0d0d0"></div>
<div class="a" style="left:857px;top:798px;width:1px;height:21px;background:#d0d0d0"></div>
<svg style="left:838px;top:802px" width="13" height="14" viewBox="0 0 13 14" fill="none" stroke="#0054a6" stroke-width="1.300"><path d="M12.500.700H1L7 7 1 13.300h11.500"/></svg>
<svg style="left:863px;top:800px" width="16" height="16" viewBox="0 0 16 16" fill="none" stroke="#0054a6" stroke-width="1.200"><path d="M1 14.500l1.300-4L11.800 1l2.700 2.700L5 13.200zM10 2.800l2.700 2.700M2.300 10.500l2.700 2.700"/><path d="M8 15h7" stroke-width="1.500"/></svg>


<!-- RIGHT PANEL -->
<div class="a" style="left:894px;top:35px;width:7px;height:794px;background:#00aeef"></div>
<div id="rp" class="a"></div>
<div class="a" style="letter-spacing:-0.91px;left:910px;top:44.500px;font-size:21.5px;line-height:28px;color:#fff;white-space:nowrap">Zakázka 10/2021/18</div>
<svg style="left:1101px;top:49px" width="14" height="13" viewBox="0 0 14 13" fill="none" stroke="#fff" stroke-width="1.2"><path d="M3.500 3.500v-3h10v8h-3M.600 3.600h9.800v8.800H.600zM5 8.500l4-3.500M6 4.800h3.200V8"/></svg>
<div class="sc" style="top:102px;height:168px"></div>
<div class="sh" style="top:77px;width:196px"><i style="letter-spacing:0.07px;">Základní údaje</i></div>
<div class="a" style="left:1078px;top:79px;width:1px;height:21px;background:#0b86c2"></div>
<svg style="left:1083.5px;top:86px" width="14" height="8" viewBox="0 0 14 8" fill="none" stroke="#fff" stroke-width="1.2"><path d="M.5 7.200l6.500-6.500L13.500 7.200"/></svg>
<div class="lb" style="letter-spacing:-0.20px;top:109px">Odběratel:</div>
<div class="ln" style="top:123px"></div>
<div class="a" style="letter-spacing:-0.24px;left:973px;top:109px;font-size:12px;line-height:14px;white-space:nowrap">AB Group; Husova; Br...</div>
<div class="lb" style="letter-spacing:-0.31px;top:131px">Popis:</div>
<div class="ln" style="top:145px"></div>
<div class="lb" style="letter-spacing:0.06px;top:153px">Netto:</div>
<div class="vl" style="letter-spacing:-0.57px;top:153px">57 906,80 <i class="kc">Kč</i></div>
<div class="ln" style="top:167px"></div>
<div class="lb" style="letter-spacing:-0.62px;top:175px">DPH:</div>
<div class="vl" style="letter-spacing:-0.57px;top:175px">12 160,43 <i class="kc">Kč</i></div>
<div class="ln" style="top:189px"></div>
<div class="lb" style="letter-spacing:0.00px;top:197px"><b>Brutto:</b></div>
<div class="vl" style="letter-spacing:-0.01px;top:197px"><b>70 067,23 <i class="kc">Kč</i></b></div>
<div class="ln" style="top:211px"></div>
<div class="lb" style="letter-spacing:-0.06px;top:219px">Datum dodání:</div>
<div class="vl" style="letter-spacing:-0.76px;top:219px">10.01.2023</div>
<div class="ln" style="top:233px"></div>
<div class="pf" style="left:914px;top:240px">O</div>
<div class="pf" style="left:940px;top:240px">R</div>
<div class="pf" style="left:966px;top:240px">V</div>
<div class="pf" style="left:992px;top:240px">D</div>
<div class="pf" style="left:1018px;top:240px">F</div>
<div class="pf" style="left:1044px;top:240px">W</div>
<div class="sc" style="top:301px;height:80px"></div>
<div class="sh" style="top:276px;width:196px"><i style="letter-spacing:-0.13px;">Zálohy k zakázce</i></div>
<div class="a" style="left:1078px;top:278px;width:1px;height:21px;background:#0b86c2"></div>
<svg style="left:1083.5px;top:285px" width="14" height="8" viewBox="0 0 14 8" fill="none" stroke="#fff" stroke-width="1.2"><path d="M.5 7.200l6.500-6.500L13.500 7.200"/></svg>
<svg style="left:1037px;top:280px" width="17" height="17" viewBox="0 0 17 17" fill="none" stroke="#fff" stroke-width="1.100"><path d="M7 15.500H.600V.600h8l4 4V7M8.600.600v4h4"/><path d="M9.500 8.500h6v8h-6z"/><path d="M11 10.500h3M11 12.500h3M11 14.500h3" stroke-width="1"/></svg>
<svg style="left:1061px;top:280px" width="17" height="17" viewBox="0 0 17 17" fill="none" stroke="#fff" stroke-width="1.100"><path d="M7 15.500H.600V.600h8l4 4V7M8.600.600v4h4M2.500 8.500h4M2.500 10.500h4M2.500 12.500h4"/><path d="M9.500 8.500h6v8h-6z"/><path d="M11 10.500h3M11 12.500h3M11 14.500h3" stroke-width="1"/></svg>
<div class="lb" style="letter-spacing:-0.23px;top:308px">Čerpáno:</div>
<div class="vl" style="letter-spacing:-0.46px;top:308px">0,00 <i class="kc">Kč</i></div>
<div class="ln" style="top:322px"></div>
<div class="lb" style="letter-spacing:-0.08px;top:330px"><b>Dočerpat:</b></div>
<div class="vl" style="letter-spacing:-0.06px;top:330px"><b>0,00 <i class="kc">Kč</i></b></div>
<div class="ln" style="top:344px"></div>
<div class="sc" style="top:412px;height:80px"></div>
<div class="sh" style="top:387px;width:196px"><i style="letter-spacing:0.08px;">Zálohy k odběrateli</i></div>
<div class="a" style="left:1078px;top:389px;width:1px;height:21px;background:#0b86c2"></div>
<svg style="left:1083.5px;top:396px" width="14" height="8" viewBox="0 0 14 8" fill="none" stroke="#fff" stroke-width="1.2"><path d="M.5 7.200l6.500-6.500L13.500 7.200"/></svg>
<svg style="left:1058px;top:391.500px" width="20" height="17" viewBox="0 0 20 17" fill="none" stroke="#fff" stroke-width="1.100"><circle cx="7" cy="4.500" r="3.800"/><path d="M.600 15c.5-4 3-6 6.400-6 1.500 0 2.800.4 3.800 1.200"/><path d="M12.500 8.500h6v8h-6z"/><path d="M14 10.500h3M14 12.500h3M14 14.500h3" stroke-width="1"/></svg>
<div class="lb" style="letter-spacing:-0.23px;top:419px">Čerpáno:</div>
<div class="vl" style="letter-spacing:-0.55px;top:419px">337 478,26 <i class="kc">Kč</i></div>
<div class="ln" style="top:433px"></div>
<div class="lb" style="letter-spacing:-0.08px;top:441px"><b>Dočerpat:</b></div>
<div class="vl" style="letter-spacing:-0.06px;top:441px"><b>0,00 <i class="kc">Kč</i></b></div>
<div class="ln" style="top:455px"></div>
<div class="sc" style="top:523px;height:224px;overflow:hidden"></div>
<div class="sh" style="top:498px;width:196px"><i style="letter-spacing:-0.02px;">Obchodní informace</i></div>
<div class="a" style="left:1078px;top:500px;width:1px;height:21px;background:#0b86c2"></div>
<svg style="left:1083.5px;top:507px" width="14" height="8" viewBox="0 0 14 8" fill="none" stroke="#fff" stroke-width="1.2"><path d="M.5 7.200l6.500-6.500L13.500 7.200"/></svg>
<div class="a" style="letter-spacing:-0.17px;left:918px;top:534px;font-size:13px;line-height:16px;font-weight:bold;color:#17469f;white-space:nowrap">Plán</div>
<div class="a" style="left:914px;top:552px;width:182px;height:2px;background:#00aeef"></div>
<div class="lb" style="letter-spacing:-0.27px;top:561px">Zisk:</div>
<div class="vl" style="letter-spacing:-0.43px;top:561px">-172 517,59 <i class="kc">Kč</i></div>
<div class="lb" style="letter-spacing:-0.32px;top:582px">Přirážka:</div>
<div class="vl" style="letter-spacing:-0.51px;top:582px">-74,87</div>
<div class="lb" style="letter-spacing:-0.28px;top:603px">Marže:</div>
<div class="vl" style="letter-spacing:-0.39px;top:603px">-297,92</div>
<div class="lb" style="letter-spacing:-0.26px;top:624px">Skladová cena:</div>
<div class="vl" style="letter-spacing:-0.51px;top:624px">230 424,39 <i class="kc">Kč</i></div>
<div class="a" style="letter-spacing:-0.31px;left:918px;top:649px;font-size:13px;line-height:16px;font-weight:bold;color:#17469f;white-space:nowrap">Skutečnost</div>
<div class="a" style="left:914px;top:667px;width:182px;height:2px;background:#00aeef"></div>
<div class="lb" style="letter-spacing:-0.27px;top:676px">Zisk:</div>
<div class="vl" style="letter-spacing:-0.43px;top:676px">-172 517,59 <i class="kc">Kč</i></div>
<div class="lb" style="letter-spacing:-0.32px;top:697px">Přirážka:</div>
<div class="vl" style="letter-spacing:-0.51px;top:697px">-74,87</div>
<div class="lb" style="letter-spacing:-0.28px;top:718px">Marže:</div>
<div class="vl" style="letter-spacing:-0.39px;top:718px">-297,92</div>
<div class="a" style="left:907px;top:735px;width:196px;height:12px;overflow:hidden"><div class="lb" style="letter-spacing:-0.26px;left:7px;top:3px">Skladová cena:</div><div class="vl" style="letter-spacing:-0.51px;right:8px;top:3px">230 424,39 <i class="kc">Kč</i></div></div>
<div class="a" style="left:1103px;top:77px;width:17px;height:670px;background:#f0f0f0"></div>
<div class="a" style="left:1104px;top:94px;width:15px;height:499px;background:#cdcdcd"></div>
<svg style="left:1107.500px;top:82px" width="9" height="7" viewBox="0 0 9 7" fill="none" stroke="#404040" stroke-width="1.700"><path d="M.800 5.700l3.700-3.700 3.700 3.700"/></svg>
<svg style="left:1107.500px;top:735px" width="9" height="7" viewBox="0 0 9 7" fill="none" stroke="#404040" stroke-width="1.700"><path d="M.800 1.300l3.700 3.700L8.200 1.300"/></svg>
<div class="sc" style="top:775px;height:51px;width:213px"></div>
<div class="sh" style="top:750px;width:213px"><i style="letter-spacing:-0.18px;">Nastavení</i></div>
<div class="a" style="left:1095px;top:752px;width:1px;height:21px;background:#0b86c2"></div>
<svg style="left:1100.5px;top:759px" width="14" height="8" viewBox="0 0 14 8" fill="none" stroke="#fff" stroke-width="1.2"><path d="M.5 7.200l6.500-6.500L13.500 7.200"/></svg>
<div class="lb" style="letter-spacing:-0.11px;left:921.800px;top:782px">Období</div>
<div class="lb" style="letter-spacing:-0.61px;left:1024.500px;top:782px">Sklad</div>
<div class="a" style="left:914px;top:796px;width:97px;height:23px;background:#ffffe1;border:1px solid #00a4ef"></div>
<div class="a" style="left:1017px;top:796px;width:97px;height:23px;background:#ffffe1;border:1px solid #00a4ef"></div>
<div class="a" style="letter-spacing:-0.41px;left:917px;top:801px;font-size:13px;line-height:15px">2025</div>
<svg style="left:993.5px;top:803px" width="12" height="10" viewBox="0 0 12 10" fill="none" stroke="#23479e" stroke-width="1.100"><path d="M0 0h2.600v2.400H0zM4.700 0h2.600v2.400H4.700zM9.400 0h2.600v2.400H9.400z" fill="#23479e" stroke="none"/><path d="M.500 4l5.500 5 5.500-5"/></svg>
<svg style="left:1095.5px;top:803px" width="12" height="10" viewBox="0 0 12 10" fill="none" stroke="#23479e" stroke-width="1.100"><path d="M0 0h2.600v2.400H0zM4.700 0h2.600v2.400H4.700zM9.400 0h2.600v2.400H9.400z" fill="#23479e" stroke="none"/><path d="M.500 4l5.500 5 5.500-5"/></svg>
<div class="a" style="left:895.700px;top:420px;width:4px;height:4px;border-radius:2px;background:#3dbdf0"></div>
<div class="a" style="left:895.700px;top:429px;width:4px;height:4px;border-radius:2px;background:#3dbdf0"></div>
<div class="a" style="left:895.700px;top:438px;width:4px;height:4px;border-radius:2px;background:#3dbdf0"></div>


<!-- MENUS -->
<div class="menu" style="left:143px;top:614px;width:326px;height:198px"></div>
<div class="a" style="left:146px;top:617px;width:320px;height:30px;background:#91c9f7"></div>
<div class="mi" style="letter-spacing:0.33px;left:185px;top:625px">Auto</div>
<svg style="left:456px;top:627px" width="5" height="9" viewBox="0 0 5 9" fill="#fff"><path d="M0 0l4.500 4.500L0 9z"/></svg>
<div class="mi" style="letter-spacing:-0.19px;left:185px;top:655px">Tovární</div>
<svg style="left:456px;top:657px" width="5" height="9" viewBox="0 0 5 9" fill="#000"><path d="M0 0l4.500 4.500L0 9z"/></svg>
<div class="a" style="left:183px;top:679px;width:284px;height:1px;background:#d7d7d7"></div>
<svg style="left:153px;top:689px" width="17" height="18" viewBox="0 0 17 18" fill="none" stroke="#000" stroke-width="1.100"><path d="M.600.600h5.400v16.800H.600z"/><path d="M4.300 4.500h11.700L11.500 10v6L9 14v-4z" fill="#f2f2f2"/></svg>
<div class="mi" style="letter-spacing:0.12px;left:185px;top:691px">Sloupcový filtr</div>
<div class="mi" style="letter-spacing:0.23px;left:390px;top:691px">Ctrl+Alt+F</div>
<div class="a" style="left:183px;top:715px;width:284px;height:1px;background:#d7d7d7"></div>
<div class="mi" style="letter-spacing:0.19px;left:185px;top:728px">Přidat/odebrat podmínku filtru</div>
<div class="mi" style="letter-spacing:0.02px;left:375.500px;top:728px">Ctrl+Shift+F9</div>
<div class="mi" style="letter-spacing:0.20px;left:185px;top:757px;color:#8c8c8c">Vypnout</div>
<svg style="left:150px;top:782.500px" width="23" height="23" viewBox="0 0 23 23" fill="none" stroke="#000" stroke-width="1.100"><path d="M3.800.600H.600V4M18.600.600h3.200V4M3.800 22H.600V18.600M18.600 22h3.200V18.600"/><path d="M3.500 3h3.400v16.500H3.500zM9.500 3h3.400v16.500H9.500zM15.500 3h3.400v16.500h-3.400z"/></svg>
<div class="mi" style="letter-spacing:-0.08px;left:185px;top:787px">Správa filtrů</div>
<div class="mi" style="letter-spacing:0.16px;left:358.300px;top:787px">Ctrl+Alt+Shift+S</div>
<!-- submenu 1 -->
<div class="menu" style="left:464px;top:614px;width:105px;height:35px"></div>
<div class="a" style="left:467px;top:617px;width:100px;height:29px;background:#91c9f7"></div>
<div class="mi" style="letter-spacing:-0.44px;left:506.400px;top:625px">Leasing</div>
<svg style="left:560px;top:627px" width="5" height="9" viewBox="0 0 5 9" fill="#fff"><path d="M0 0l4.500 4.500L0 9z"/></svg>
<!-- submenu 2 -->
<div class="menu" style="left:568px;top:614px;width:126px;height:35px"></div>
<div class="a" style="left:571px;top:617px;width:120px;height:29px;background:#91c9f7"></div>
<svg style="left:579px;top:624px" width="15" height="16" viewBox="0 0 15 16" fill="none" stroke="#000" stroke-width="1.100"><path d="M.800.600h13L8.700 7v8L6 12.500V7z"/></svg>
<div class="mi" style="letter-spacing:-0.44px;left:610.600px;top:625px">Leasing</div>
<div class="mi" style="left:658.500px;top:625px">U</div>

</body>
</html>
